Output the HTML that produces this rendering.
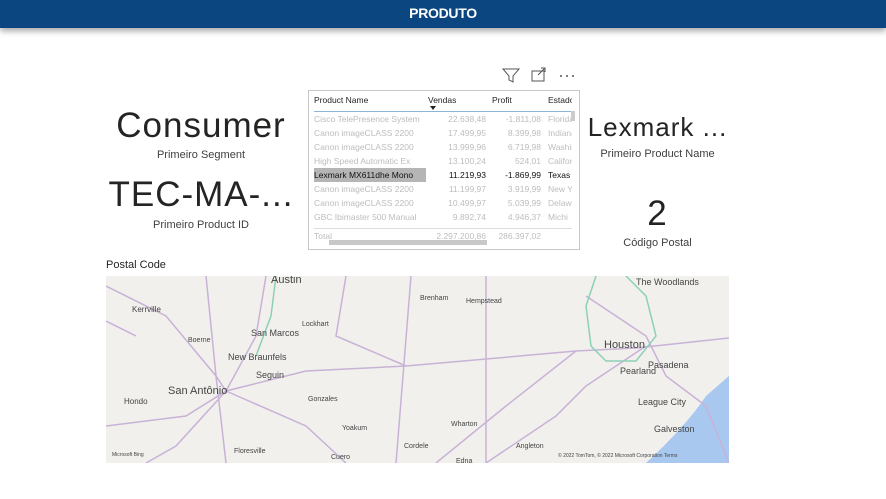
<!DOCTYPE html>
<html><head><meta charset="utf-8"><style>
body{margin:0;width:886px;height:499px;background:#fff;font-family:"Liberation Sans",sans-serif;position:relative;overflow:hidden}
.hdr{position:absolute;left:0;top:0;width:886px;height:28px;background:#0b4680;box-shadow:0 3px 6px rgba(0,0,0,.35);color:#fff;font-weight:bold;font-size:14px;text-align:center;line-height:27px;letter-spacing:-0.3px}
.a{position:absolute;text-align:center;color:#252423;white-space:nowrap}
.big{font-size:35px;letter-spacing:1px}
.lbl{font-size:11px;color:#404040}
.tbl{position:absolute;left:308px;top:90px;width:270px;height:158px;border:1px solid #c8c8c8;font-size:8.5px}
.r{position:absolute;left:5px;height:14px;line-height:14px;color:#bdbdbd;width:258px}
.r span{position:absolute;white-space:nowrap}
.c1{left:0;width:112px;overflow:hidden;text-overflow:ellipsis}.c2{right:86px}.c3{right:31px}.c4{left:234px;width:24px;overflow:hidden}
</style></head><body>
<div class="hdr">PRODUTO</div>

<div class="a big" style="left:100px;width:202px;top:106px">Consumer</div>
<div class="a lbl" style="left:100px;width:202px;top:149px">Primeiro Segment</div>
<div class="a big" style="left:100px;width:202px;top:175px">TEC-MA-...</div>
<div class="a lbl" style="left:100px;width:202px;top:219px">Primeiro Product ID</div>
<div class="a" style="left:560px;width:195px;top:112px;font-size:26px;letter-spacing:1px">Lexmark ...</div>
<div class="a lbl" style="left:560px;width:195px;top:148px">Primeiro Product Name</div>
<div class="a big" style="left:560px;width:195px;top:194px">2</div>
<div class="a lbl" style="left:560px;width:195px;top:237px">Código Postal</div>

<svg style="position:absolute;left:500px;top:66px" width="80" height="18">
<path d="M3 3h16l-6 7v6l-4-2v-4z" fill="none" stroke="#555" stroke-width="1"/>
<rect x="32" y="5" width="12" height="10" fill="none" stroke="#555"/>
<path d="M38 9l7-7M41 2h4v4" fill="none" stroke="#555"/>
<circle cx="61" cy="10" r="1" fill="#555"/><circle cx="67" cy="10" r="1" fill="#555"/><circle cx="73" cy="10" r="1" fill="#555"/>
</svg>

<div class="tbl">
 <div class="r" style="top:2px;color:#252423;height:18px;border-bottom:1px solid #8ab4d8"><span style="left:0">Product Name</span><span style="left:114px">Vendas</span><span style="left:178px">Profit</span><span class="c4">Estado</span></div>
 <div style="position:absolute;left:121px;top:15px;border:3px solid transparent;border-top:4px solid #222"></div>
 <div class="r" style="top:21px"><span class="c1">Cisco TelePresence System</span><span class="c2">22.638,48</span><span class="c3">-1.811,08</span><span class="c4">Florida</span></div>
 <div class="r" style="top:35px"><span class="c1">Canon imageCLASS 2200</span><span class="c2">17.499,95</span><span class="c3">8.399,98</span><span class="c4">Indiana</span></div>
 <div class="r" style="top:49px"><span class="c1">Canon imageCLASS 2200</span><span class="c2">13.999,96</span><span class="c3">6.719,98</span><span class="c4">Washin</span></div>
 <div class="r" style="top:63px"><span class="c1">High Speed Automatic Ex</span><span class="c2">13.100,24</span><span class="c3">524,01</span><span class="c4">Califor</span></div>
 <div class="r" style="top:77px;color:#111"><span class="c1" style="background:#b5b5b5">Lexmark MX611dhe Mono</span><span class="c2">11.219,93</span><span class="c3">-1.869,99</span><span class="c4">Texas</span></div>
 <div class="r" style="top:91px"><span class="c1">Canon imageCLASS 2200</span><span class="c2">11.199,97</span><span class="c3">3.919,99</span><span class="c4">New Y</span></div>
 <div class="r" style="top:105px"><span class="c1">Canon imageCLASS 2200</span><span class="c2">10.499,97</span><span class="c3">5.039,99</span><span class="c4">Delaw</span></div>
 <div class="r" style="top:119px"><span class="c1">GBC Ibimaster 500 Manual</span><span class="c2">9.892,74</span><span class="c3">4.946,37</span><span class="c4">Michi</span></div>
 <div class="r" style="top:137px;border-top:1px solid #ddd"><span style="left:0">Total</span><span class="c2">2.297.200,86</span><span class="c3">286.397,02</span></div>
 <div style="position:absolute;left:20px;top:149px;width:158px;height:5px;background:#c8c8c8"></div>
 <div style="position:absolute;left:262px;top:20px;width:4px;height:10px;background:#ccc"></div>
</div>

<svg style="position:absolute;left:106px;top:276px" width="623" height="187">
<rect width="623" height="187" fill="#f1f0ed"/>
<path d="M540 187 Q580 150 600 120 L623 100 L623 187Z" fill="#a9c8ef"/>
<path d="M590 140 L623 130 L623 187 L560 187Z" fill="#a9c8ef"/>
<g fill="none" stroke="#c8b2d6" stroke-width="1.5">
<path d="M0 150 L80 140 L120 115 L200 95 L300 90 L380 83 L470 75 L530 72 L623 62"/>
<path d="M0 10 L60 40 L110 100 L120 115"/>
<path d="M120 115 L70 170 L40 187"/>
<path d="M100 0 L110 100 L120 187"/>
<path d="M160 0 L150 60 L120 115"/>
<path d="M240 0 L230 60 L300 90"/>
<path d="M305 0 L290 187"/>
<path d="M380 0 L380 187"/>
<path d="M470 75 L400 130 L330 187"/>
<path d="M540 70 L480 110 L450 140 L380 187"/>
<path d="M120 115 L200 150 L240 187"/>
<path d="M480 20 L540 60 L560 100 L600 130 L623 187"/>
<path d="M0 45 L30 60"/>
</g>
<g fill="none" stroke="#8cd0b8" stroke-width="1.5">
<path d="M170 0 L165 40 L150 80"/>
<path d="M490 0 L480 30 L485 70 L500 85 L530 85 L550 60 L540 20 L520 0"/>
</g>
<g fill="#444" font-size="8" font-family="Liberation Sans,sans-serif">
<text x="26" y="36">Kerrville</text>
<text x="82" y="66" font-size="7">Boerne</text>
<text x="145" y="60" font-size="9">San Marcos</text>
<text x="196" y="50" font-size="7">Lockhart</text>
<text x="122" y="84" font-size="9">New Braunfels</text>
<text x="150" y="102" font-size="9">Seguin</text>
<text x="62" y="118" font-size="11">San Antônio</text>
<text x="18" y="128">Hondo</text>
<text x="202" y="125" font-size="7">Gonzales</text>
<text x="236" y="154" font-size="7">Yoakum</text>
<text x="128" y="177" font-size="7">Floresville</text>
<text x="225" y="183" font-size="7">Cuero</text>
<text x="165" y="7" font-size="11">Austin</text>
<text x="314" y="24" font-size="7">Brenham</text>
<text x="360" y="27" font-size="7">Hempstead</text>
<text x="530" y="9" font-size="9">The Woodlands</text>
<text x="498" y="72" font-size="11">Houston</text>
<text x="542" y="92" font-size="9">Pasadena</text>
<text x="514" y="98" font-size="9">Pearland</text>
<text x="532" y="129" font-size="9">League City</text>
<text x="548" y="156" font-size="9">Galveston</text>
<text x="345" y="150" font-size="7">Wharton</text>
<text x="298" y="172" font-size="7">Cordele</text>
<text x="410" y="172" font-size="7">Angleton</text>
<text x="350" y="187" font-size="7">Edna</text>
<text x="6" y="180" font-size="5">Microsoft Bing</text>
<text x="452" y="181" font-size="5">© 2022 TomTom, © 2022 Microsoft Corporation  Terms</text>
</g>
</svg>
<div style="position:absolute;left:106px;top:259px;font-size:11px;color:#252423">Postal Code</div>
</body></html>
